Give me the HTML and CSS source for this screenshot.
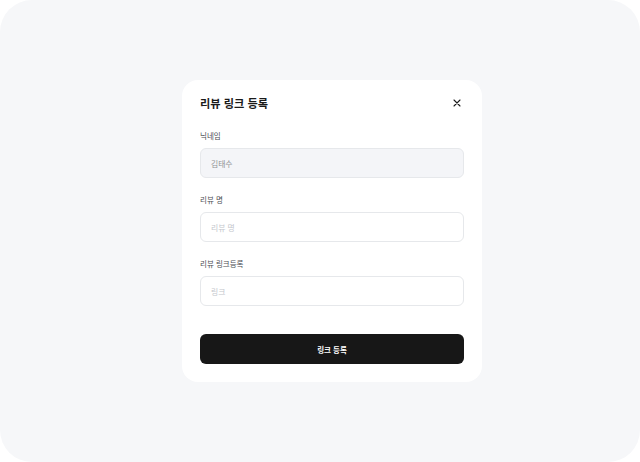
FILE: index.html
```html
<!DOCTYPE html>
<html lang="ko">
<head>
  <meta charset="UTF-8" />
  <meta name="viewport" content="width=device-width, initial-scale=1.0">
  <title>리뷰 링크 등록</title>
  <link rel="stylesheet" href="styles.css">
</head>
<body>

<div class="frame">
  <div class="modal">
    <div class="modal-header">
      <h2>리뷰 링크 등록</h2>
      <button class="close-btn" aria-label="닫기">
        <svg width="8" height="8" viewBox="0 0 8 8">
          <path d="M1 1 L7 7 M7 1 L1 7" stroke="#1a1a1a" stroke-width="1.1" stroke-linecap="round" />
        </svg>
      </button>
    </div>

    <div class="field">
      <label for="nickname">닉네임</label>
      <input type="text" id="nickname" class="readonly" value="김태수" readonly />
    </div>

    <div class="field">
      <label for="reviewName">리뷰 명</label>
      <input type="text" id="reviewName" placeholder="리뷰 명" />
    </div>

    <div class="field">
      <label for="reviewLink">리뷰 링크등록</label>
      <input type="text" id="reviewLink" placeholder="링크" />
    </div>

    <button class="submit-btn">링크 등록</button>
  </div>
</div>

</body>
</html>
```

FILE: styles.css
```css
:root {
  --bg: #ffffff;
  --frame: #f6f7f9;
  --card: #ffffff;
  --text: #1a1a1a;
  --label: #4a4d52;
  --border: #e6e8eb;
  --muted: #8f9194;
  --placeholder: #c3c6cc;
}

body {
  background: var(--bg);
  color: var(--text);
  font-family: "Noto Sans CJK KR", "Noto Sans", sans-serif;
  margin: 0;
}

.frame {
  width: 640px;
  height: 462px;
  box-sizing: border-box;
  background: var(--frame);
  border-radius: 32px;
  display: flex;
  align-items: center;
  justify-content: center;
  padding-left: 24px;
}

.modal {
  width: 300px;
  box-sizing: border-box;
  background: var(--card);
  border-radius: 16px;
  padding: 14px 18px 18px;
  display: flex;
  flex-direction: column;
}

.modal-header {
  display: flex;
  justify-content: space-between;
  align-items: center;
  height: 18px;
  margin-bottom: 19px;
}

.modal-header h2 {
  margin: 0;
  font-size: 11.2px;
  font-weight: 700;
  line-height: 18px;
}

.close-btn {
  background: none;
  border: none;
  padding: 0;
  width: 16px;
  height: 16px;
  display: flex;
  align-items: center;
  justify-content: center;
  margin-right: -1px;
  cursor: pointer;
}

.field {
  display: flex;
  flex-direction: column;
  gap: 7px;
  margin-bottom: 17px;
}

.field label {
  font-size: 7.5px;
  line-height: 10px;
  color: var(--label);
}

.field input {
  height: 30px;
  box-sizing: border-box;
  border: 1px solid var(--border);
  border-radius: 6px;
  padding: 0 10px;
  font-family: inherit;
  font-size: 7.8px;
  color: var(--text);
  background: var(--card);
  outline: none;
}

.field input::placeholder {
  color: var(--placeholder);
}

.field input.readonly {
  background: #f4f5f8;
  color: var(--muted);
}

.submit-btn {
  margin-top: 11px;
  height: 30px;
  border: none;
  border-radius: 6px;
  background: #171717;
  color: #ffffff;
  font-family: inherit;
  font-size: 7.5px;
  font-weight: 700;
  cursor: pointer;
}
```
